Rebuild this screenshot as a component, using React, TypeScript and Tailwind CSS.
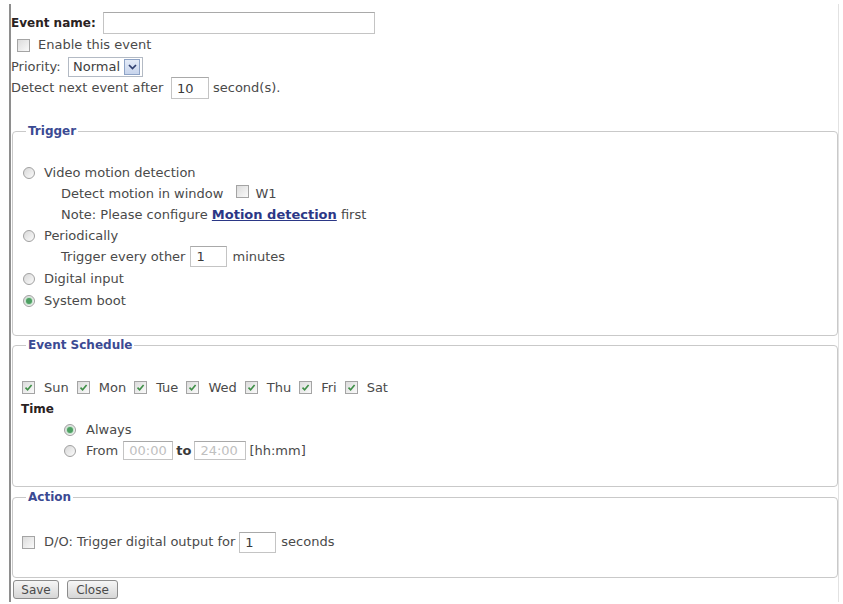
import type { ReactNode } from "react";

function Check({ checked = false }: { checked?: boolean }) {
  return (
    <span className="inline-flex items-center justify-center w-[13px] h-[13px] shrink-0 border border-[#a4a4a4] bg-linear-to-br from-[#dcdcdc] to-[#fafafa]">
      {checked && (
        <svg width="9" height="9" viewBox="0 0 9 9">
          <path d="M1.5 4.6 L3.6 6.8 L7.6 1.9" stroke="#3f8f47" strokeWidth="1.6" fill="none" />
        </svg>
      )}
    </span>
  );
}

function Radio({ checked = false }: { checked?: boolean }) {
  return (
    <span className="inline-flex items-center justify-center w-[12px] h-[12px] shrink-0 rounded-full border border-[#a0a0a0] bg-linear-to-br from-[#d8d8d8] to-[#fbfbfb]">
      {checked && <span className="w-[6px] h-[6px] rounded-full bg-[#4e9f63] ring-1 ring-[#c4e4cc]" />}
    </span>
  );
}

function Field({ value = "", className = "", muted = false }: { value?: string; className?: string; muted?: boolean }) {
  return (
    <input
      readOnly
      value={value}
      className={`border border-[#c4c4c4] border-t-[#a9a9a9] bg-white px-[5px] text-[13px] outline-none ${muted ? "text-[#c0c0c0]" : "text-[#3a3a3a]"} ${className}`}
    />
  );
}

function Row({ children, className = "" }: { children: ReactNode; className?: string }) {
  return <div className={`flex items-center ${className}`}>{children}</div>;
}

function Group({
  title,
  children,
  className = "",
  legendClass = "",
}: {
  title: string;
  children: ReactNode;
  className?: string;
  legendClass?: string;
}) {
  return (
    <fieldset className={`ml-[1px] w-[826px] rounded-[4px] border border-[#c9c9c9] ${className}`}>
      <legend className={`px-[2px] text-[12px] leading-[14px] font-bold text-[#3b4a93] ${legendClass}`}>{title}</legend>
      {children}
    </fieldset>
  );
}

function Button({ label, className = "" }: { label: string; className?: string }) {
  return (
    <button className={`h-[19px] rounded-[3px] border border-[#8c8c8c] bg-linear-to-b from-[#f6f6f6] to-[#d6d6d6] text-[12px] leading-none text-[#4a4a4a] ${className}`}>
      {label}
    </button>
  );
}

const days = ["Sun", "Mon", "Tue", "Wed", "Thu", "Fri", "Sat"];

export default function App() {
  return (
    <div className="w-[843px] h-[604px] overflow-hidden bg-white font-['DejaVu_Sans',sans-serif] text-[13px] text-[#4a4a4a]">
      <div className="ml-[9px] mt-[4px] w-[830px] h-[598px] border-l-2 border-l-[#8e8e8e] border-r border-r-[#e2e2e2] pt-[8px]">
        <Row className="h-[22px]">
          <span className="text-[12px] font-bold text-[#2a2222] w-[92px]">Event name:</span>
          <Field className="w-[272px] h-[22px]" />
        </Row>
        <Row className="h-[22px] pl-[6px] gap-[8px]">
          <Check />
          <span>Enable this event</span>
        </Row>
        <Row className="h-[21px]">
          <span className="w-[57px]">Priority:</span>
          <span className="flex items-center justify-between w-[75px] h-[20px] border border-[#b3bac4] bg-white pl-[4px] pr-[2px] text-[#3d3d3d]">
            Normal
            <span className="flex items-center justify-center w-[16px] h-[16px] border border-[#8ea3c6] bg-linear-to-b from-[#e4ebf7] to-[#c7d4ec]">
              <svg width="9" height="6" viewBox="0 0 9 6">
                <path d="M1 1 L4.5 4.5 L8 1" stroke="#2f3f6f" strokeWidth="1.7" fill="none" />
              </svg>
            </span>
          </span>
        </Row>
        <Row className="h-[22px]">
          <span className="w-[160px]">Detect next event after</span>
          <Field value="10" className="w-[38px] h-[22px]" />
          <span className="ml-[4px]">second(s).</span>
        </Row>

        <Group title="Trigger" className="mt-[25px] pl-[10px] pt-[24px] pb-[24px]" legendClass="ml-[3px]">
          <Row className="h-[21px] gap-[9px]">
            <Radio />
            <span>Video motion detection</span>
          </Row>
          <Row className="h-[21px] pl-[38px]">
            <span>Detect motion in window</span>
            <span className="ml-[13px]"><Check /></span>
            <span className="ml-[6px]">W1</span>
          </Row>
          <Row className="h-[21px] pl-[38px]">
            <span className="whitespace-pre">Note: Please configure </span>
            <a className="font-bold underline text-[#2b3786]">Motion detection</a>
            <span className="whitespace-pre"> first</span>
          </Row>
          <Row className="h-[21px] gap-[9px]">
            <Radio />
            <span>Periodically</span>
          </Row>
          <Row className="h-[21px] pl-[38px]">
            <span>Trigger every other</span>
            <Field value="1" className="ml-[5px] w-[37px] h-[21px]" />
            <span className="ml-[5px]">minutes</span>
          </Row>
          <Row className="h-[23px] gap-[9px]">
            <Radio />
            <span>Digital input</span>
          </Row>
          <Row className="h-[21px] gap-[9px]">
            <Radio checked />
            <span>System boot</span>
          </Row>
        </Group>

        <Group title="Event Schedule" className="mt-[2px] pl-[8px] pt-[25px] pb-[25px]" legendClass="ml-[5px]">
          <Row className="h-[21px] pl-[1px]">
            {days.map((d) => (
              <span key={d} className="flex items-center gap-[9px] mr-[8px]">
                <Check checked />
                <span>{d}</span>
              </span>
            ))}
          </Row>
          <Row className="h-[21px]">
            <span className="text-[12px] font-bold text-[#2a2222]">Time</span>
          </Row>
          <Row className="h-[21px] pl-[43px] gap-[10px]">
            <Radio checked />
            <span>Always</span>
          </Row>
          <Row className="h-[21px] pl-[43px]">
            <Radio />
            <span className="ml-[10px]">From</span>
            <Field value="00:00" muted className="ml-[5px] w-[50px] h-[19px]" />
            <span className="mx-[3px] font-bold text-[#3a3a3a]">to</span>
            <Field value="24:00" muted className="w-[52px] h-[19px]" />
            <span className="ml-[3px]">[hh:mm]</span>
          </Row>
        </Group>

        <Group title="Action" className="mt-[3px] pl-[9px] pt-[27px] pb-[24px]" legendClass="ml-[4px]">
          <Row className="h-[22px]">
            <Check />
            <span className="ml-[9px]">D/O: Trigger digital output for</span>
            <Field value="1" className="ml-[4px] w-[37px] h-[21px]" />
            <span className="ml-[5px]">seconds</span>
          </Row>
        </Group>

        <Row className="mt-[2px] pl-[2px] gap-[8px]">
          <Button label="Save" className="w-[46px]" />
          <Button label="Close" className="w-[51px]" />
        </Row>
      </div>
    </div>
  );
}
